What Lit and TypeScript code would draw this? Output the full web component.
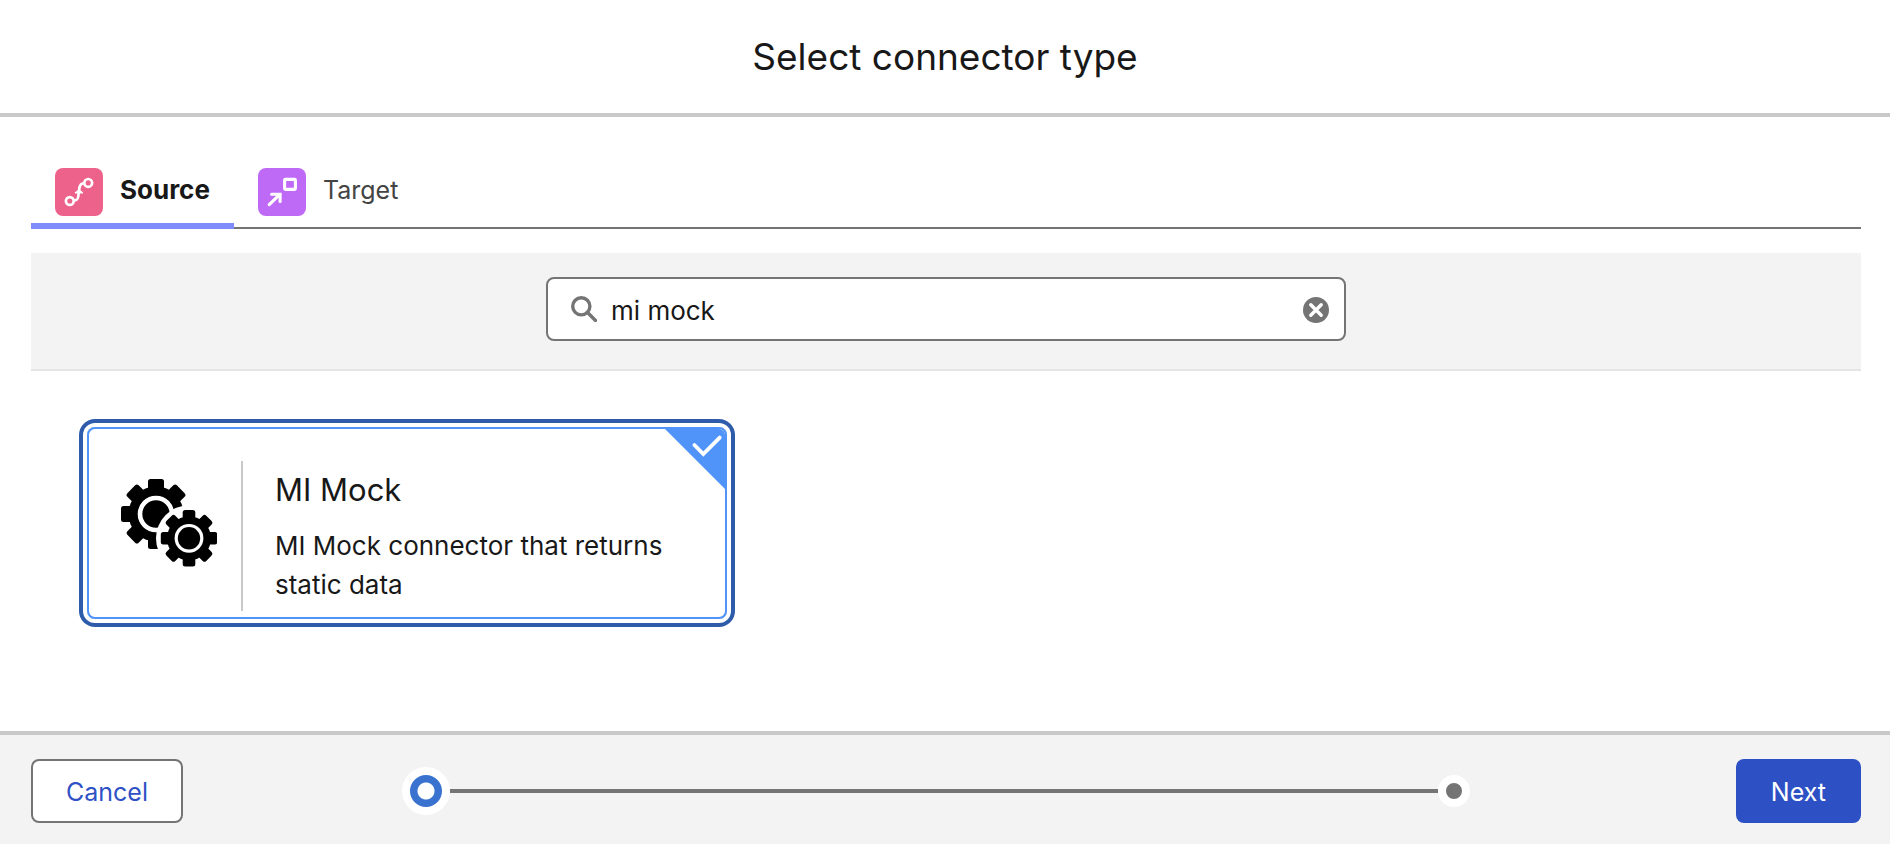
import { LitElement, html, css, svg } from "lit";
import { customElement, state } from "lit/decorators.js";

const TEETH = [0, 45, 90, 135, 180, 225, 270, 315];

const gear = (cx: number, cy: number, tip: number, body: number, tooth: number) => svg`
  <circle cx=${cx} cy=${cy} r=${body} />
  ${TEETH.map(
    (a) => svg`<rect x=${cx - tooth / 2} y=${cy - tip} width=${tooth} height=${tip} rx="2.5"
      transform="rotate(${a} ${cx} ${cy})" />`
  )}
`;

@customElement("app-root")
export class AppRoot extends LitElement {
  @state() private tab = "source";
  @state() private query = "mi mock";

  static styles = css`
    :host {
      display: flex;
      flex-direction: column;
      min-height: 100vh;
      background: #fff;
      color: #181818;
      font-family: Inter, "Liberation Sans", sans-serif;
      font-size: 26px;
      line-height: 39px;
    }
    * {
      box-sizing: border-box;
    }
    button,
    input {
      font: inherit;
      color: inherit;
    }
    svg {
      display: block;
      flex: none;
    }
    .header {
      padding: 32px 31px 31px;
      border-bottom: 4px solid #c9c9c9;
      text-align: center;
    }
    .title {
      margin: 0;
      font-size: 37px;
      line-height: 50px;
      font-weight: 400;
    }
    .body {
      flex: 1;
      padding: 38px 29px 24px 31px;
    }
    .tabs {
      display: flex;
      box-shadow: inset 0 -2px #747474;
    }
    .tab {
      display: flex;
      align-items: center;
      gap: 17px;
      padding: 13px 24px 7px;
      border: 0;
      border-bottom: 6px solid transparent;
      background: none;
      color: #444;
      font-size: 25px;
      line-height: 44px;
      cursor: pointer;
    }
    .tab.active {
      border-color: #7f8cfb;
      color: #181818;
      font-size: 26px;
      font-weight: 700;
    }
    .tab-label {
      padding-bottom: 4px;
    }
    .search-band {
      margin-top: 24px;
      padding: 24px;
      padding-bottom: 28px;
      background: #f3f3f3;
      border-bottom: 2px solid #e5e5e5;
    }
    .search {
      display: flex;
      align-items: center;
      max-width: 800px;
      height: 64px;
      margin: 0 auto;
      padding: 0 15px 0 23px;
      background: #fff;
      border: 2px solid #747474;
      border-radius: 8px;
    }
    .search-input {
      flex: 1;
      min-width: 0;
      height: 60px;
      padding: 2px 14px 0;
      border: 0;
      outline: none;
      background: none;
    }
    .clear {
      padding: 2px 0 0;
      border: 0;
      background: none;
      cursor: pointer;
    }
    .results {
      padding: 56px;
    }
    .card {
      position: relative;
      display: flex;
      width: 100%;
      max-width: 640px;
      padding: 32px 32px 6px;
      border: 2px solid #5094fa;
      border-radius: 8px;
      box-shadow: 0 0 0 4px #fff, 0 0 0 8px #2e5cab;
      overflow: hidden;
      cursor: pointer;
    }
    .card-radio {
      position: absolute;
      opacity: 0;
    }
    .card-icon {
      padding: 18px 24px 0 0;
      border-right: 2px solid #c9c9c9;
    }
    .card-text {
      padding: 7px 0 7px 32px;
    }
    .card-title {
      display: block;
      margin-bottom: 14px;
      font-size: 31px;
      line-height: 44px;
    }
    .card-desc {
      display: block;
    }
    .corner {
      position: absolute;
      top: 0;
      right: 0;
    }
    .footer {
      display: grid;
      grid-template-columns: minmax(0, 371fr) minmax(0, 1068fr) minmax(0, 391fr);
      align-items: center;
      padding: 24px 29px 21px 31px;
      background: #f3f3f3;
      border-top: 4px solid #c9c9c9;
    }
    .btn {
      height: 64px;
      padding: 2px 33px 0;
      border: 2px solid #747474;
      border-radius: 8px;
      background: #fff;
      color: #2f51c6;
      font-size: 25px;
      cursor: pointer;
      justify-self: start;
    }
    .btn.primary {
      background: #2d51c5;
      border-color: #2d51c5;
      color: #fff;
      justify-self: end;
    }
    .progress {
      display: flex;
      align-items: center;
    }
    .dot {
      width: 32px;
      height: 32px;
      border: 8px solid #fff;
      border-radius: 50%;
      background: #747474;
    }
    .dot.current {
      width: 48px;
      height: 48px;
      background: radial-gradient(circle, #fff 8px, #3a73cf 9px);
    }
    .track {
      flex: 1;
      height: 4px;
      background: #747474;
    }
  `;

  render() {
    return html`
      <header class="header"><h1 class="title">Select connector type</h1></header>
      <main class="body">
        <div class="tabs" role="tablist">
          ${this.renderTab("source", "Source", this.sourceIcon())}
          ${this.renderTab("target", "Target", this.targetIcon())}
        </div>
        <div class="search-band">
          <div class="search">
            <svg width="26" height="26" viewBox="0 0 26 26" fill="none" stroke="#747474" stroke-width="3.4">
              <circle cx="10.3" cy="10.3" r="8.6" />
              <path d="M16.3 16.3l8.2 8.2" stroke-linecap="round" />
            </svg>
            <input class="search-input" type="text" aria-label="Search connectors" .value=${this.query}
              @input=${(e: Event) => (this.query = (e.target as HTMLInputElement).value)} />
            <button class="clear" aria-label="Clear" @click=${() => (this.query = "")}>
              <svg width="26" height="26" viewBox="0 0 26 26">
                <circle cx="13" cy="13" r="13" fill="#747474" />
                <path d="M7.8 7.8l10.4 10.4M18.2 7.8L7.8 18.2" stroke="#fff" stroke-width="3.4" stroke-linecap="round" />
              </svg>
            </button>
          </div>
        </div>
        <div class="results">
          <label class="card">
            <input class="card-radio" type="radio" name="connector" checked />
            <span class="card-icon">${this.gearsIcon()}</span>
            <span class="card-text">
              <span class="card-title">MI Mock</span>
              <span class="card-desc">MI Mock connector that returns static data</span>
            </span>
            <svg class="corner" width="60" height="60" viewBox="0 0 60 60">
              <path d="M0 0H60V60Z" fill="#5094fa" />
              <path d="M29.4 16l8.9 9L54.7 8.6" fill="none" stroke="#fff" stroke-width="3.8" stroke-linecap="round" />
            </svg>
          </label>
        </div>
      </main>
      <footer class="footer">
        <button class="btn">Cancel</button>
        <div class="progress" role="progressbar" aria-label="Step 1 of 2" aria-valuemin="1" aria-valuemax="2" aria-valuenow="1">
          <span class="dot current"></span>
          <span class="track"></span>
          <span class="dot"></span>
        </div>
        <button class="btn primary">Next</button>
      </footer>
    `;
  }

  private renderTab(id: string, label: string, icon: unknown) {
    const active = this.tab === id;
    return html`<button class="tab ${active ? "active" : ""}" role="tab" aria-selected=${active}
      @click=${() => (this.tab = id)}>${icon}<span class="tab-label">${label}</span></button>`;
  }

  private sourceIcon() {
    return html`<svg width="48" height="48" viewBox="0 0 48 48">
      <rect width="48" height="48" rx="8" fill="#ed628a" />
      <g fill="none" stroke="#fff" stroke-width="2.7">
        <circle cx="14.8" cy="33" r="3.9" />
        <circle cx="33.2" cy="14.9" r="3.9" />
        <path d="M18.4 32.6C22 32.6 23.2 31.4 23.4 27.5C23.6 24.5 24 24 24.3 20.5C24.7 16.8 26 15.2 29.6 15" />
        <path d="M20.4 24.8L24 21.9L27.5 24.8Z" fill="#fff" stroke-width="1.2" stroke-linejoin="round" />
      </g>
    </svg>`;
  }

  private targetIcon() {
    return html`<svg width="48" height="48" viewBox="0 0 48 48">
      <rect width="48" height="48" rx="8" fill="#bf69f7" />
      <g fill="none" stroke="#fff" stroke-width="3.1">
        <rect x="26.6" y="11.4" width="10.8" height="10" rx="0.8" />
        <path d="M11.2 36.6L21.6 26.6" stroke-linecap="round" />
        <path d="M13.6 26.2H22.1V33.4" stroke-linecap="round" stroke-linejoin="miter" />
      </g>
    </svg>`;
  }

  private gearsIcon() {
    return html`<svg width="96" height="88" viewBox="0 0 96 88">
      ${gear(35, 35, 35, 27.5, 16)}
      <circle cx="35" cy="35" r="16" fill="none" stroke="#fff" stroke-width="4.6" />
      <circle cx="68" cy="59.3" r="33" fill="#fff" />
      ${gear(68, 59.3, 28.2, 22, 12.6)}
      <circle cx="68" cy="59.3" r="12.8" fill="none" stroke="#fff" stroke-width="3.2" />
    </svg>`;
  }
}
